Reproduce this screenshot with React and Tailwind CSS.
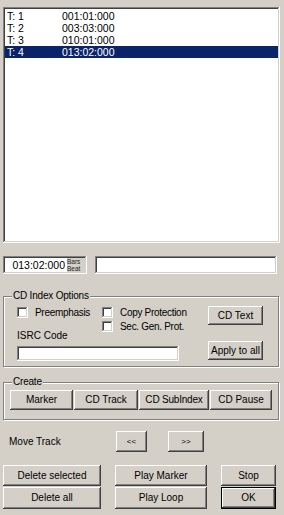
import React from "react";

const raised =
  "bg-[#d4d0c8] shadow-[inset_-1px_-1px_#404040,inset_1px_1px_#ffffff,inset_-2px_-2px_#808080,inset_2px_2px_#d4d0c8]";
const sunken =
  "shadow-[inset_-1px_-1px_#ffffff,inset_1px_1px_#808080,inset_-2px_-2px_#d4d0c8,inset_2px_2px_#404040]";

const tracks = [
  { t: "T: 1", time: "001:01:000" },
  { t: "T: 2", time: "003:03:000" },
  { t: "T: 3", time: "010:01:000" },
  { t: "T: 4", time: "013:02:000" },
];

function Btn({ children, className = "" }) {
  return (
    <div
      className={`flex items-center justify-center whitespace-nowrap text-black ${raised} ${className}`}
    >
      {children}
    </div>
  );
}

function Check({ label, className = "" }) {
  return (
    <div className={`flex items-center gap-[7px] whitespace-nowrap tracking-[-0.3px] ${className}`}>
      <div className={`shrink-0 w-[11px] h-[11px] bg-white ${sunken}`} />
      <span>{label}</span>
    </div>
  );
}

function Group({ label, className = "", children }) {
  return (
    <div
      className={`relative border border-[#808080] shadow-[inset_1px_1px_#ffffff,1px_1px_#ffffff] ${className}`}
    >
      <span className="absolute left-[8px] -top-[7px] px-[1px] bg-[#d4d0c8] leading-[12px] tracking-[-0.2px]">
        {label}
      </span>
      {children}
    </div>
  );
}

export default function App() {
  const selected = 3;
  return (
    <div
      className="w-[284px] h-[515px] bg-[#d4d0c8] text-black text-[10px] leading-[12px] overflow-hidden"
      style={{ fontFamily: '"Liberation Sans", Arial, sans-serif' }}
    >
      {/* track list */}
      <div className={`ml-[3px] mt-[7px] w-[277px] h-[236px] bg-white p-[2px] ${sunken}`}>
        <div className="pt-[1px] text-[10.5px]">
          {tracks.map((tr, i) => (
            <div
              key={i}
              className={`flex h-[12px] items-center ${
                i === selected ? "bg-[#0a246a] text-white" : ""
              }`}
            >
              <span className="w-[57px] pl-[2px]">{tr.t}</span>
              <span>{tr.time}</span>
            </div>
          ))}
        </div>
      </div>

      {/* position row */}
      <div className="flex mt-[13px] ml-[3px] gap-[8px]">
        <div className={`flex w-[84px] h-[18px] bg-white p-[2px] ${sunken}`}>
          <div className="flex-1 flex items-center justify-end pr-[2px] text-[10.5px]">
            013:02:000
          </div>
          <div className="w-[18px] bg-[#d4d0c8] flex flex-col justify-center text-[6.5px] leading-[7px] text-[#222]">
            <span>Bars</span>
            <span>Beat</span>
          </div>
        </div>
        <div className={`w-[182px] h-[18px] bg-white ${sunken}`} />
      </div>

      {/* CD index options */}
      <Group label="CD Index Options" className="ml-[3px] mt-[22px] w-[276px] h-[71px]">
        <div className="flex pt-[9px] pl-[13px] pr-[15px]">
          <div className="w-[162px] flex flex-col">
            <div className="flex h-[13px]">
              <Check label="Preemphasis" className="w-[85px] shrink-0" />
              <Check label="Copy Protection" className="shrink-0" />
            </div>
            <div className="flex h-[13px] mt-[1px] pl-[85px]">
              <Check label="Sec. Gen. Prot." className="shrink-0" />
            </div>
            <div className="mt-[-3px] h-[12px]">ISRC Code</div>
            <div className={`mt-[4px] h-[15px] bg-white ${sunken}`} />
          </div>
          <div className="ml-auto flex flex-col">
            <Btn className="w-[55px] h-[19px]">CD Text</Btn>
            <Btn className="w-[55px] h-[19px] mt-[16px]">Apply to all</Btn>
          </div>
        </div>
      </Group>

      {/* create */}
      <Group label="Create" className="ml-[3px] mt-[15px] w-[276px] h-[38px]">
        <div className="flex gap-[1px] pt-[7px] pl-[6px]">
          <Btn className="w-[63px] h-[20px]">Marker</Btn>
          <Btn className="w-[64px] h-[20px]">CD Track</Btn>
          <Btn className="w-[70px] h-[20px] tracking-[-0.2px]">CD SubIndex</Btn>
          <Btn className="w-[62px] h-[20px]">CD Pause</Btn>
        </div>
      </Group>

      {/* move track */}
      <div className="flex items-center mt-[11px] h-[21px]">
        <span className="ml-[9px] w-[107px]">Move Track</span>
        <Btn className="w-[31px] h-[21px] text-[8px]">&lt;&lt;</Btn>
        <Btn className="w-[36px] h-[21px] ml-[21px] text-[8px]">&gt;&gt;</Btn>
      </div>

      {/* bottom buttons */}
      <div className="grid grid-cols-[98px_92px_55px] gap-x-[14px] gap-y-[1px] ml-[3px] mt-[13px]">
        <Btn className="h-[21px]">Delete selected</Btn>
        <Btn className="h-[21px]">Play Marker</Btn>
        <Btn className="h-[21px]">Stop</Btn>
        <Btn className="h-[22px]">Delete all</Btn>
        <Btn className="h-[22px]">Play Loop</Btn>
        <Btn className="h-[22px] border border-black">OK</Btn>
      </div>
    </div>
  );
}
